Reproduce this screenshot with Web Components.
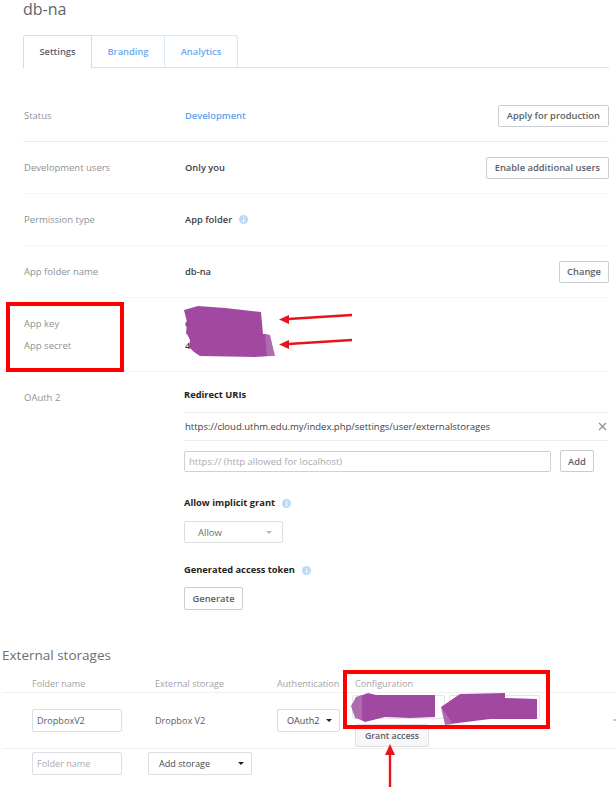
<!DOCTYPE html>
<html>
<head>
<meta charset="utf-8">
<style>
  html, body { margin: 0; padding: 0; background: #fff; }
  body { width: 616px; height: 790px; overflow: hidden; position: relative; font-family: "Open Sans", sans-serif; font-size: 9.5px; color: #3d4045; }
</style>
</head>
<body>
<app-page></app-page>
<script>
class AppBtn extends HTMLElement {
  constructor() {
    super()
    this.attachShadow({ mode: 'open' }).innerHTML = `
      <style>
        :host { display: inline-flex; align-items: center; justify-content: center; box-sizing: border-box; height: 22px; padding: 0 8px; background: #fff; border: 1px solid #c9ccd0; border-radius: 2px; font-size: 9.350px; font-weight: 600; color: #5b6068; white-space: nowrap; }
        :host([soft]) { background: #f7f7f7; border-color: #e2e2e2; font-size: 8.800px; }
      </style><slot></slot>`
  }
}
customElements.define('app-btn', AppBtn)

class InfoDot extends HTMLElement {
  constructor() {
    super()
    this.attachShadow({ mode: 'open' }).innerHTML = `
      <style>
        :host { display: inline-flex; width: 9px; height: 9px; margin-left: 7px; }
        svg { display: block; }
      </style>
      <svg width="9" height="9" viewBox="0 0 9 9"><circle cx="4.5" cy="4.5" r="4.5" fill="#bcd9f7"/><rect x="4" y="4" width="1.2" height="3.4" fill="#fff"/><rect x="4" y="1.8" width="1.2" height="1.2" fill="#fff"/></svg>`
  }
}
customElements.define('info-dot', InfoDot)

class SettingRow extends HTMLElement {
  constructor() {
    super()
    this.attachShadow({ mode: 'open' }).innerHTML = `
      <style>
        :host { display: grid; grid-template-columns: 161px 1fr auto; align-items: center; box-sizing: border-box; height: 52px; padding-left: 1px; border-bottom: 1px solid #f3f7fb; }
        :host([strong]) { border-bottom: 1px solid #eaeaea; }
        .label { color: #8f9296; font-size: 9.500px; }
        .value { font-size: 9.350px; font-weight: 600; color: #3d4045; display: flex; align-items: center; }
      </style>
      <div class="label"><slot name="label"></slot></div>
      <div class="value"><slot></slot></div>
      <div><slot name="action"></slot></div>`
  }
}
customElements.define('setting-row', SettingRow)

class TabBar extends HTMLElement {
  constructor() {
    super()
    this.attachShadow({ mode: 'open' }).innerHTML = `
      <style>
        :host { display: flex; height: 33px; box-sizing: border-box; border-bottom: 1px solid #dfe3e6; font-size: 9.350px; font-weight: 600; }
        .tab { box-sizing: border-box; height: 32px; padding-bottom: 1px; display: flex; align-items: center; justify-content: center; border: 1px solid #d6e8fa; border-left: 0; border-bottom: 0; color: #6aa9f2; }
        .tab.on { height: 33px; padding-bottom: 2px; background: #fff; color: #5b6068; border: 1px solid #d9dcdf; border-bottom: 0; border-radius: 3px 0 0 0; }
        .last { border-radius: 0 3px 0 0; }
      </style>
      <div class="tab on" style="width:69px">Settings</div>
      <div class="tab" style="width:73px">Branding</div>
      <div class="tab last" style="width:73px">Analytics</div>`
  }
}
customElements.define('tab-bar', TabBar)

class FieldBox extends HTMLElement {
  constructor() {
    super()
    this.attachShadow({ mode: 'open' }).innerHTML = `
      <style>
        :host { display: flex; align-items: center; box-sizing: border-box; height: 23px; padding: 0 4px; background: #fff; border: 1px solid #dcdee0; border-radius: 2px; color: #5b6068; white-space: nowrap; }
        :host([ghost]) { color: #a9abae; }
      </style><slot></slot>`
  }
}
customElements.define('field-box', FieldBox)

class PickBox extends HTMLElement {
  constructor() {
    super()
    this.attachShadow({ mode: 'open' }).innerHTML = `
      <style>
        :host { display: flex; align-items: center; justify-content: space-between; box-sizing: border-box; height: 23px; padding: 0 7px 0 10px; background: #fff; border: 1px solid #dcdee0; border-radius: 2px; color: #45484d; white-space: nowrap; }
        i { width: 0; height: 0; border: 3px solid transparent; border-top: 3px solid var(--caret, #222); border-bottom: 0; }
      </style><slot></slot><i></i>`
  }
}
customElements.define('pick-box', PickBox)

class OauthBlock extends HTMLElement {
  constructor() {
    super()
    this.attachShadow({ mode: 'open' }).innerHTML = `
      <style>
        :host { display: grid; grid-template-columns: 160px 1fr; padding: 16px 0 0 1px; }
        .label { color: #8f9296; line-height: 16px; padding-top: 2px; }
        h4 { margin: 0; font-size: 9.300px; font-weight: 700; color: #1e1f22; line-height: 14px; display: flex; align-items: center; }
        .uri { display: flex; justify-content: space-between; align-items: center; box-sizing: border-box; width: 425px; height: 29px; margin-top: 10px; padding: 0 2px 0 1px; border-top: 1px solid #ececec; border-bottom: 1px solid #ececec; color: #3d4045; }
        .x { width: 9px; height: 9px; display: block; }
        .add { display: flex; gap: 9px; margin-top: 9px; }
        .add field-box { width: 367px; height: 21px; margin-top: 1px; border-color: #cfd1d3; }
        .add app-btn { width: 34px; }
        .grant { margin-top: 24px; }
        .allow { width: 99px; height: 22px; margin-top: 11px; color: #6d7074; padding-left: 13px; --caret: #b4b6b8; padding-right: 10px; }
        .token { margin-top: 20px; }
        .gen { margin-top: 10px; height: 23px; width: 59px; }
      </style>
      <div class="label">OAuth 2</div>
      <div>
        <h4>Redirect URIs</h4>
        <div class="uri">https://cloud.uthm.edu.my/index.php/settings/user/externalstorages
          <svg class="x" viewBox="0 0 9 9"><path d="M1 1L8 8M8 1L1 8" stroke="#8f9296" stroke-width="1.3"/></svg>
        </div>
        <div class="add"><field-box ghost>https:// (http allowed for localhost)</field-box><app-btn>Add</app-btn></div>
        <h4 class="grant">Allow implicit grant<info-dot></info-dot></h4>
        <pick-box class="allow">Allow</pick-box>
        <h4 class="token">Generated access token<info-dot></info-dot></h4>
        <app-btn class="gen">Generate</app-btn>
      </div>`
  }
}
customElements.define('oauth-block', OauthBlock)

class StorageTable extends HTMLElement {
  constructor() {
    super()
    this.attachShadow({ mode: 'open' }).innerHTML = `
      <style>
        :host { display: block; margin: 12px 0 0 2px; font-size: 9.100px; }
        .head { display: grid; grid-template-columns: 123px 122px 78px 1fr; height: 15px; padding-left: 30px; border-bottom: 1px solid #f0f0f0; color: #a0a3a6; line-height: 14px; }
        .row { display: grid; grid-template-columns: 90px 33px 122px 63px 12px 1fr; align-items: start; height: 56px; padding: 16px 0 0 30px; box-sizing: border-box; border-bottom: 1px solid #f0f0f0; }
        .name { grid-column: 3; line-height: 23px; color: #5b6068; }
        .auth { grid-column: 4; padding: 0 7px 0 9px; }
        .cfg { grid-column: 6; display: flex; flex-direction: column; margin-top: -14px; }
        .boxes { display: flex; gap: 4px; }
        .boxes field-box { width: 93px; height: 24px; border-color: #e4e6e8; }
        .boxes field-box + field-box { width: 91px; }
        .cfg app-btn { align-self: flex-start; margin: 5px 0 0 3px; width: 74px; height: 23px; }
        .foot { display: flex; padding: 3px 0 0 30px; }
        .foot field-box { width: 90px; }
        .foot pick-box { width: 104px; margin-left: 26px; }
      </style>
      <div class="head"><div>Folder name</div><div>External storage</div><div>Authentication</div><div>Configuration</div></div>
      <div class="row">
        <field-box>DropboxV2</field-box>
        <div class="name">Dropbox V2</div>
        <pick-box class="auth">OAuth2</pick-box>
        <div class="cfg">
          <div class="boxes"><field-box></field-box><field-box></field-box></div>
          <app-btn soft>Grant access</app-btn>
        </div>
      </div>
      <div class="foot"><field-box ghost>Folder name</field-box><pick-box>Add storage</pick-box></div>`
  }
}
customElements.define('storage-table', StorageTable)

class MarkUp extends HTMLElement {
  constructor() {
    super()
    // the red boxes, arrows and purple scribbles are painted over the screenshot
    this.attachShadow({ mode: 'open' }).innerHTML = `
      <style>
        :host { position: absolute; left: 0; top: 0; width: 616px; height: 790px; pointer-events: none; }
        svg { display: block; }
      </style>
      <svg width="616" height="790" viewBox="0 0 616 790">
        <path d="M613 720H616" stroke="#999" stroke-width="1"/>
        <g fill="#9c3f9b" fill-opacity=".95">
          <path d="M184 310L198 306L225 308L261 312L263 334L186 334L187 322Z"/>
          <path d="M187 334L267 334L271 356L255 357L200 356L194 352L189 347L190 340Z"/>
          <path d="M355 698L368 693L376 695L435 695L435 717L410 718L385 717L365 722L357 718Z"/>
          <path d="M441 707L460 694L505 693L505 698L537 699L537 719L490 719L450 724Z"/>
        </g>
        <g fill="#b06ab0">
          <path d="M265 334L270 335L275 356L267 356Z"/>
          <path d="M351 706L356 697L362 695L362 720L355 718Z"/>
          <path d="M441 707L453 724L445 725Z"/>
        </g>
        <g fill="none" stroke="#f00" stroke-width="4">
          <rect x="8" y="304" width="114" height="66"/>
          <rect x="345" y="672" width="203" height="55"/>
        </g>
        <g stroke="#e8141c" stroke-width="2.400" fill="#e8141c">
          <path d="M288 319L352 315"/><path d="M279 319.500L289 315L289 324Z" stroke="none"/>
          <path d="M288 344L352 340"/><path d="M279 344.500L289 340L289 349Z" stroke="none"/>
          <path d="M390 754L390 787"/><path d="M390 744L385 755L395 755Z" stroke="none"/>
        </g>
      </svg>`
  }
}
customElements.define('mark-up', MarkUp)

class AppPage extends HTMLElement {
  constructor() {
    super()
    this.attachShadow({ mode: 'open' }).innerHTML = `
      <style>
        :host { display: block; }
        .main { padding: 0 7px 0 23px; }
        h1 { margin: 0; height: 35px; font-size: 16px; font-weight: 400; line-height: 19px; color: #5f6368; }
        .rows { margin-top: 22px; }
        .change { width: 50px; }
        .keys { display: grid; grid-template-columns: 161px 1fr; grid-auto-rows: 14px; row-gap: 8px; height: 74px; box-sizing: border-box; padding: 19px 0 0 1px; border-bottom: 1px solid #f3f7fb; color: #8f9296; line-height: 14px; }
        .keys b { font-weight: 600; color: #3d4045; }
        .ext { margin: 35px 0 0; padding-left: 2px; font-size: 13.500px; font-weight: 400; color: #6b6e72; line-height: 20px; }
        a { color: #5da3f0; text-decoration: none; }
      </style>
      <div class="main">
        <h1>db-na</h1>
        <tab-bar></tab-bar>
        <div class="rows">
          <setting-row strong><span slot="label">Status</span><a>Development</a><app-btn slot="action">Apply for production</app-btn></setting-row>
          <setting-row><span slot="label">Development users</span>Only you<app-btn slot="action">Enable additional users</app-btn></setting-row>
          <setting-row><span slot="label">Permission type</span>App folder<info-dot></info-dot></setting-row>
          <setting-row><span slot="label">App folder name</span>db-na<app-btn class="change" slot="action">Change</app-btn></setting-row>
          <div class="keys"><div>App key</div><b>6</b><div>App secret</div><b>4</b></div>
        </div>
        <oauth-block></oauth-block>
      </div>
      <div class="ext">External storages</div>
      <storage-table></storage-table>
      <mark-up></mark-up>`
  }
}
customElements.define('app-page', AppPage)
</script>
</body>
</html>
